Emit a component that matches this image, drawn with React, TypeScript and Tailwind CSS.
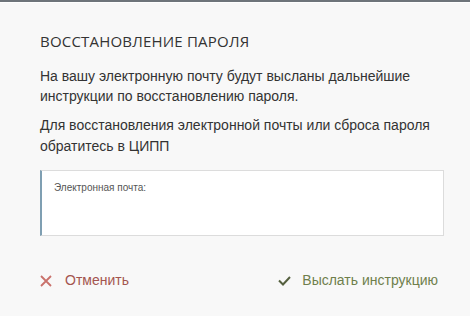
import React from 'react';

export default function App() {
  return (
    <div className="w-[470px] h-[316px] bg-[#f8f8f8] border-t-2 border-[#6e747a] overflow-hidden" style={{ fontFamily: '"Liberation Sans", Arial, sans-serif' }}>
      <div className="h-px bg-white" />
      <div className="pl-10 pr-[26px] pt-[28px]">
        <h2 className="text-[15px] text-[#333] tracking-[0.2px] leading-5" style={{ fontFamily: '"Open Sans", sans-serif' }}>
          ВОССТАНОВЛЕНИЕ ПАРОЛЯ
        </h2>
        <p className="mt-[15px] text-[14px] leading-5 text-[#333]">
          На вашу электронную почту будут высланы дальнейшие инструкции по восстановлению пароля.
        </p>
        <p className="mt-[9px] text-[14px] leading-[21px] text-[#333]">
          Для восстановления электронной почты или сброса пароля обратитесь в ЦИПП
        </p>
        <div className="mt-[13px] h-[66px] w-[404px] bg-white border border-[#dcdcdc] border-l-2 border-l-[#7f9fb2] pl-[12px] pt-[9px]">
          <label className="block text-[10px] text-[#555]">Электронная почта:</label>
          <input className="w-full outline-none text-[13px] bg-transparent" />
        </div>
        <div className="mt-[34px] flex items-center justify-between pr-[6px]">
          <button className="flex items-center gap-[13px] text-[14px] text-[#a4554f]">
            <svg width="12" height="12" viewBox="0 0 12 12" className="text-[#c9716b]">
              <path d="M1 1 L11 11 M11 1 L1 11" stroke="currentColor" strokeWidth="1.8" fill="none" />
            </svg>
            Отменить
          </button>
          <button className="flex items-center gap-[11px] text-[14px] text-[#6f7f4c]">
            <svg width="13" height="10" viewBox="0 0 13 10" className="text-[#55603f]">
              <path d="M1 4.5 L5 8.5 L12 1" stroke="currentColor" strokeWidth="2" fill="none" />
            </svg>
            Выслать инструкцию
          </button>
        </div>
      </div>
    </div>
  );
}
